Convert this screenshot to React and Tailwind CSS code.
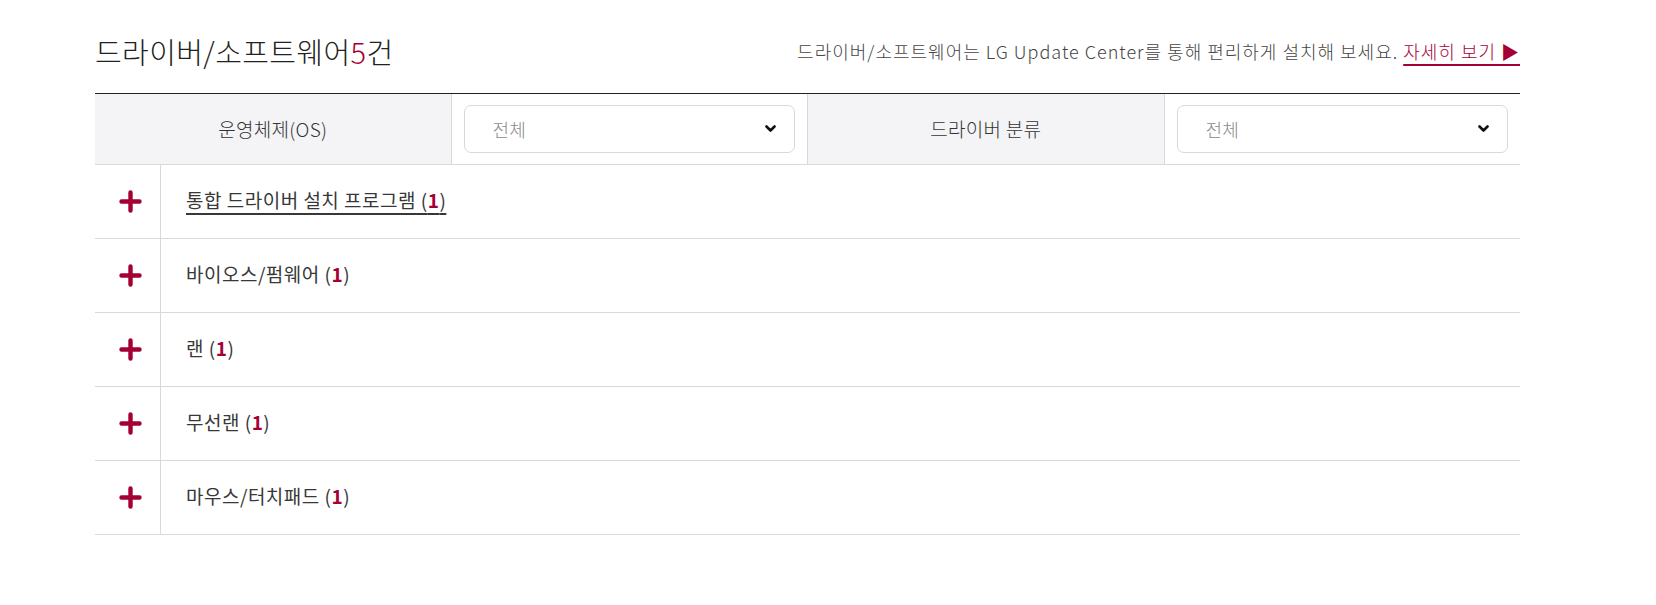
import React from "react";

const FONT = { fontFamily: '"Noto Sans CJK KR", "Noto Sans", sans-serif' };

function Chevron() {
  return (
    <svg width="11" height="8" viewBox="0 0 11 8" className="shrink-0">
      <path d="M1.5 1.5 L5.5 5.5 L9.5 1.5" fill="none" stroke="#111" strokeWidth="2.6" strokeLinecap="round" strokeLinejoin="round" />
    </svg>
  );
}

function Plus() {
  return (
    <svg width="23" height="23" viewBox="0 0 23 23">
      <path d="M11.5 2.5 V20.5 M2.5 11.5 H20.5" fill="none" stroke="#a50034" strokeWidth="4.4" strokeLinecap="round" />
    </svg>
  );
}

function SelectBox() {
  return (
    <div className="flex-1 px-3 py-[11px]">
      <div className="flex h-[48px] items-center justify-between rounded-[7px] border border-[#d9d9d9] bg-white pl-[28px] pr-[18px]">
        <span className="text-[18px] font-light tracking-[0.3px] text-[#8a8a8a]">전체</span>
        <Chevron />
      </div>
    </div>
  );
}

const rows = [
  { name: "통합 드라이버 설치 프로그램", underline: true },
  { name: "바이오스/펌웨어" },
  { name: "랜" },
  { name: "무선랜" },
  { name: "마우스/터치패드" },
];

export default function App() {
  return (
    <div className="min-h-[605px] bg-white" style={FONT}>
      <div className="ml-[95px] w-[1425px] pt-[28px]">
        <div className="flex h-[46px] items-center justify-between">
          <h2 className="text-[29px] font-light leading-none tracking-[0.4px] text-[#222]">
            드라이버/소프트웨어<span className="text-[#a50034]">5</span>건
          </h2>
          <p className="text-[18px] font-light tracking-[1px] text-[#444]">
            드라이버/소프트웨어는 LG Update Center를 통해 편리하게 설치해 보세요.{" "}
            <a className="text-[#a50034] underline decoration-[2px] underline-offset-[5px]">
              자세히 보기 ▶
            </a>
          </p>
        </div>

        <div className="mt-[19px] border-t border-[#222]">
          <div className="flex h-[71px] border-b border-[#d9d9d9]">
            <div className="flex flex-1 items-center justify-center border-r border-[#d9d9d9] bg-[#f4f4f6] text-[19px] font-light tracking-[0.3px] text-[#333]">
              운영체제(OS)
            </div>
            <div className="flex flex-1 border-r border-[#d9d9d9]">
              <SelectBox />
            </div>
            <div className="flex flex-1 items-center justify-center border-r border-[#d9d9d9] bg-[#f4f4f6] text-[19px] font-light tracking-[0.3px] text-[#333]">
              드라이버 분류
            </div>
            <div className="flex flex-1">
              <SelectBox />
            </div>
          </div>

          {rows.map((r) => (
            <div key={r.name} className="flex h-[74px] border-b border-[#d9d9d9]">
              <div className="flex w-[66px] shrink-0 items-center justify-center border-r border-[#d9d9d9] pl-[6px]">
                <Plus />
              </div>
              <div className="flex items-center pb-[3px] pl-[25px] text-[19px] tracking-[0.5px] text-[#383838]">
                <span className={r.underline ? "underline decoration-[1.5px] underline-offset-[5px]" : ""}>
                  {r.name} (<span className="font-bold text-[#a50034]">1</span>)
                </span>
              </div>
            </div>
          ))}
        </div>
      </div>
    </div>
  );
}
